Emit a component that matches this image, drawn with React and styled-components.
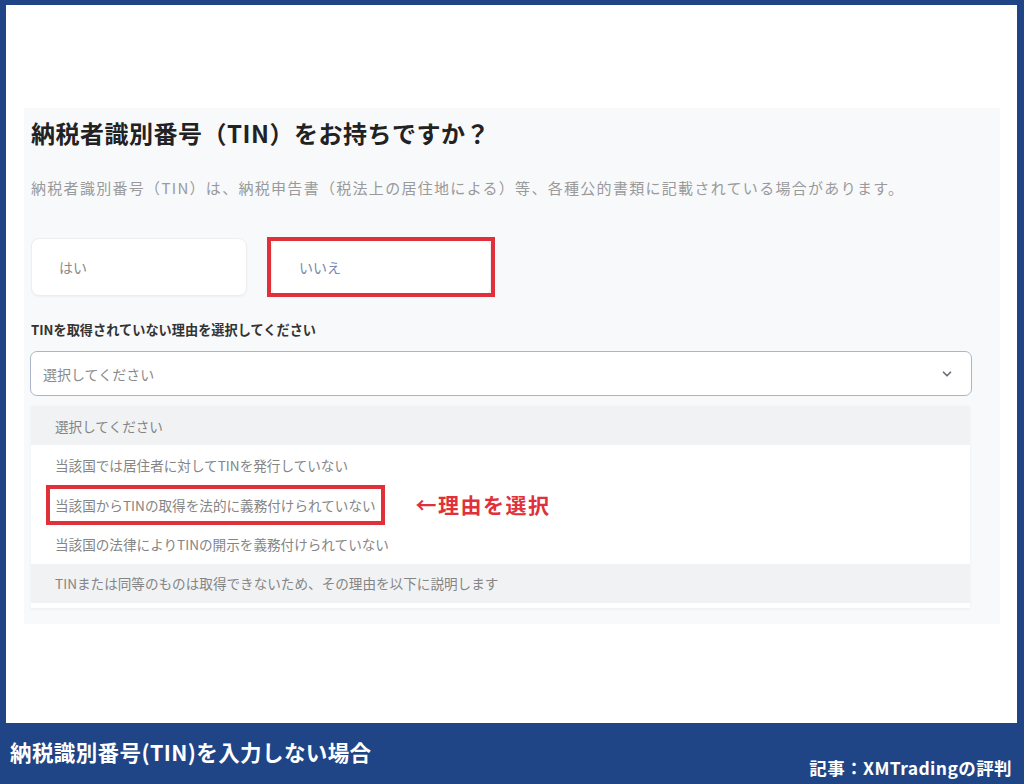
import React from 'react';
import styled, { createGlobalStyle } from 'styled-components';

const GlobalStyle = createGlobalStyle`
	html, body {
		margin: 0;
		padding: 0;
		background: #1f4586;
	}
	body {
		font-family: 'Noto Sans CJK JP', 'Noto Sans', sans-serif;
	}
`;

const reasons = [
	{ label: '選択してください', shaded: true },
	{ label: '当該国では居住者に対してTINを発行していない' },
	{ label: '当該国からTINの取得を法的に義務付けられていない', marked: true },
	{ label: '当該国の法律によりTINの開示を義務付けられていない' },
	{ label: 'TINまたは同等のものは取得できないため、その理由を以下に説明します', shaded: true },
];

export default function App(){
	return(
		<>
			<GlobalStyle/>
			<Frame>
				<Canvas>
					<Panel>
						<Title>納税者識別番号（TIN）をお持ちですか？</Title>
						<Lead>納税者識別番号（TIN）は、納税申告書（税法上の居住地による）等、各種公的書類に記載されている場合があります。</Lead>
						<Choices>
							<Choice>はい</Choice>
							<Marked>
								<Choice $active>いいえ</Choice>
								<RedBox $thick={4}/>
							</Marked>
						</Choices>
						<Label>TINを取得されていない理由を選択してください</Label>
						<Select>
							<span>選択してください</span>
							<svg width="14" height="14" viewBox="0 0 24 24" fill="none" stroke="#6b6f76" strokeWidth="3" strokeLinecap="round" strokeLinejoin="round">
								<path d="M6 9l6 6 6-6"/>
							</svg>
						</Select>
						<Options>
							{reasons.map((r) => (
								<Option key={r.label} $shaded={r.shaded}>
									{r.marked ? (
										<>
											<Marked>
												<OptionText>{r.label}</OptionText>
												<RedBox $thick={4} $inset="-7px -9px -9px -9px"/>
											</Marked>
											<Note>←理由を選択</Note>
										</>
									) : (
										<OptionText>{r.label}</OptionText>
									)}
								</Option>
							))}
						</Options>
					</Panel>
				</Canvas>
				<Banner>
					<Caption>納税識別番号(TIN)を入力しない場合</Caption>
					<Source>記事：XMTradingの評判</Source>
				</Banner>
			</Frame>
		</>
	);
}

const Frame = styled.div`
	width: 1024px;
	height: 784px;
	display: flex;
	flex-direction: column;
	background-color: #1f4586;
	padding-top: 5px;
	box-sizing: border-box;
`;

const Canvas = styled.div`
	flex: 1;
	margin: 0 7px 0 6px;
	background-color: #fff;
	padding: 103px 17px 0 18px;
`;

const Panel = styled.div`
	width: 976px;
	height: 516px;
	box-sizing: border-box;
	background-color: #f8f9fb;
	padding: 8px 7px 0 7px;
`;

const Title = styled.h1`
	margin: 0;
	font-size: 24px;
	line-height: 34px;
	font-weight: 700;
	color: #222;
	letter-spacing: 0.5px;
`;

const Lead = styled.p`
	margin: 26px 0 0 0;
	font-size: 15px;
	line-height: 24px;
	color: #9a9a9a;
	letter-spacing: 1.3px;
	white-space: nowrap;
`;

const Choices = styled.div`
	display: flex;
	gap: 24px;
	margin-top: 38px;
	align-items: flex-start;
`;

const Choice = styled.div`
	width: ${(p) => (p.$active ? '220px' : '216px')};
	height: 58px;
	box-sizing: border-box;
	display: flex;
	align-items: center;
	padding-left: 27px;
	background-color: #fff;
	border: 1px solid #eceef1;
	border-radius: 8px;
	font-size: 14px;
	color: ${(p) => (p.$active ? '#7a86ad' : '#8a8a8a')};
	box-shadow: 0 1px 2px rgba(0, 0, 0, 0.04);
`;

const Marked = styled.div`
	position: relative;
	display: inline-block;
`;

const RedBox = styled.span`
	position: absolute;
	inset: ${(p) => p.$inset || '-1px -4px -1px -4px'};
	border: ${(p) => p.$thick}px solid #e0303a;
	pointer-events: none;
`;

const Label = styled.div`
	margin-top: 24px;
	font-size: 13.2px;
	line-height: 20px;
	font-weight: 700;
	color: #333;
`;

const Select = styled.div`
	margin: 11px 0 0 -1px;
	width: 942px;
	height: 45px;
	box-sizing: border-box;
	display: flex;
	align-items: center;
	justify-content: space-between;
	padding: 0 17px 0 12px;
	background-color: #fff;
	border: 1.5px solid #aab6c7;
	border-radius: 7px;
	font-size: 14px;
	color: #8a8a8a;
`;

const Options = styled.div`
	margin-top: 10px;
	width: 939px;
	background-color: #fff;
	padding-bottom: 5px;
	box-shadow: 0 1px 3px rgba(0, 0, 0, 0.05);
`;

const Option = styled.div`
	height: 39.4px;
	display: flex;
	align-items: center;
	padding-left: 24px;
	background-color: ${(p) => (p.$shaded ? '#f1f2f4' : '#fff')};
`;

const OptionText = styled.span`
	display: inline-block;
	font-size: 13.6px;
	line-height: 20px;
	color: #858585;
	white-space: nowrap;
`;

const Note = styled.span`
	margin-left: 40px;
	font-size: 21px;
	font-weight: 700;
	color: #e0303a;
	letter-spacing: 1.5px;
`;

const Banner = styled.div`
	height: 61px;
	display: flex;
	justify-content: space-between;
	padding: 0 12px 0 10px;
	color: #fff;
	font-weight: 700;
`;

const Caption = styled.div`
	padding-top: 15px;
	font-size: 21.5px;
	line-height: 28px;
	letter-spacing: 0.4px;
`;

const Source = styled.div`
	align-self: flex-end;
	padding-bottom: 5px;
	font-size: 17.5px;
	line-height: 22px;
	letter-spacing: 0.4px;
`;
